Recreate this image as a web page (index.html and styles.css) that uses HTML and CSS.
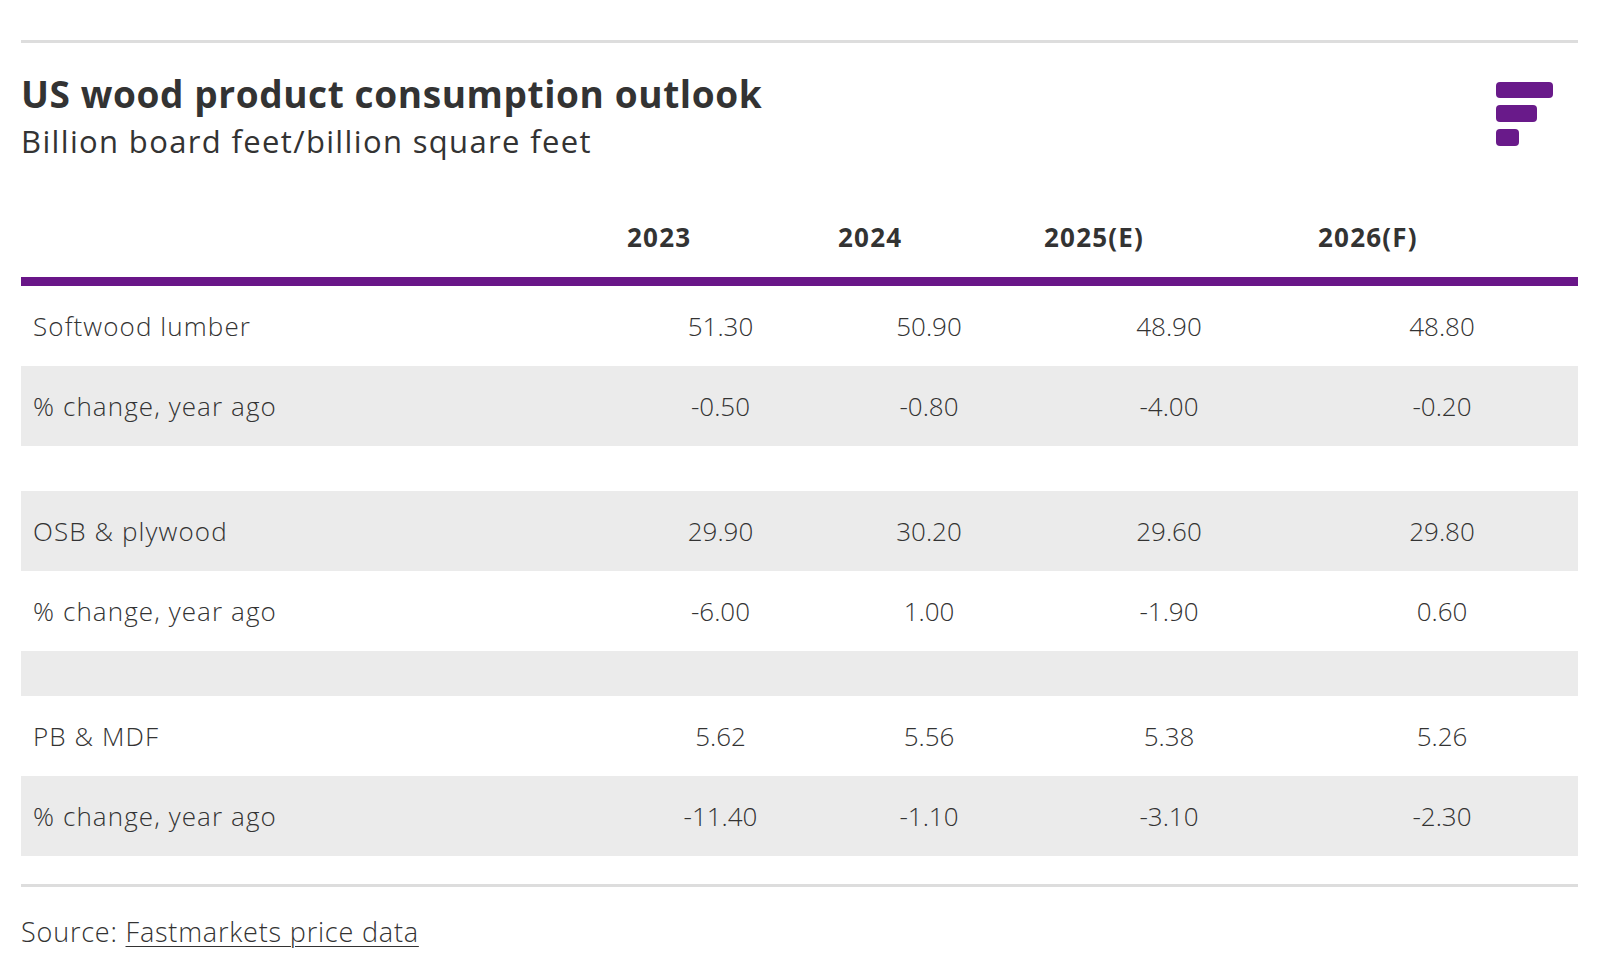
FILE: index.html
```html
<!DOCTYPE html>
<html lang="en">
<head>
<meta charset="utf-8">
<title>US wood product consumption outlook</title>
<link rel="stylesheet" href="styles.css">
</head>
<body>
<div class="chart">
  <div class="head">
    <div class="titles">
      <h1 class="title">US wood product consumption outlook</h1>
      <p class="subtitle">Billion board feet/billion square feet</p>
    </div>
    <svg class="logo" width="57" height="64" viewBox="0 0 57 64" aria-hidden="true">
      <rect x="0" y="0" width="57" height="16" rx="4" fill="#691a8a"/>
      <rect x="0" y="23" width="41" height="17" rx="4" fill="#691a8a"/>
      <rect x="0" y="47" width="23" height="17" rx="4" fill="#691a8a"/>
    </svg>
  </div>
  <div class="table">
    <div class="row hdr">
      <div class="cell"></div>
      <div class="cell">2023</div>
      <div class="cell">2024</div>
      <div class="cell">2025(E)</div>
      <div class="cell">2026(F)</div>
    </div>
    <div class="row">
      <div class="cell label">Softwood lumber</div>
      <div class="cell num">51.30</div>
      <div class="cell num">50.90</div>
      <div class="cell num">48.90</div>
      <div class="cell num">48.80</div>
    </div>
    <div class="row shade">
      <div class="cell label">% change, year ago</div>
      <div class="cell num">-0.50</div>
      <div class="cell num">-0.80</div>
      <div class="cell num">-4.00</div>
      <div class="cell num">-0.20</div>
    </div>
    <div class="row spacer"></div>
    <div class="row shade">
      <div class="cell label">OSB &amp; plywood</div>
      <div class="cell num">29.90</div>
      <div class="cell num">30.20</div>
      <div class="cell num">29.60</div>
      <div class="cell num">29.80</div>
    </div>
    <div class="row">
      <div class="cell label">% change, year ago</div>
      <div class="cell num">-6.00</div>
      <div class="cell num">1.00</div>
      <div class="cell num">-1.90</div>
      <div class="cell num">0.60</div>
    </div>
    <div class="row spacer shade"></div>
    <div class="row">
      <div class="cell label">PB &amp; MDF</div>
      <div class="cell num">5.62</div>
      <div class="cell num">5.56</div>
      <div class="cell num">5.38</div>
      <div class="cell num">5.26</div>
    </div>
    <div class="row shade">
      <div class="cell label">% change, year ago</div>
      <div class="cell num">-11.40</div>
      <div class="cell num">-1.10</div>
      <div class="cell num">-3.10</div>
      <div class="cell num">-2.30</div>
    </div>
  </div>
  <div class="source">Source: <a href="#">Fastmarkets price data</a></div>
</div>
</body>
</html>
```

FILE: styles.css
```css
html, body {
  margin: 0;
  padding: 0;
  background: #ffffff;
}

body {
  font-family: "Open Sans", "Noto Sans", "Liberation Sans", sans-serif;
  color: #333333;
}

.chart {
  width: 1557px;
  margin: 40px 0 0 21px;
  border-top: 3px solid #dddddd;
}

.head {
  display: flex;
  justify-content: space-between;
  align-items: flex-start;
  padding-top: 29px;
}

.title {
  margin: 0;
  font-size: 37px;
  line-height: 44px;
  font-weight: 700;
  letter-spacing: 0.6px;
}

.subtitle {
  margin: 7px 0 0;
  font-size: 31px;
  line-height: 36px;
  font-weight: 400;
  letter-spacing: 1.35px;
}

.logo {
  margin: 10px 25px 0 0;
}

.table {
  margin-top: 62px;
  border-bottom: 3px solid #dddddd;
  padding-bottom: 28px;
}

.row {
  display: grid;
  grid-template-columns: 594px 211px 206px 274px 272px;
  height: 80px;
  align-items: center;
}

.row.hdr {
  height: auto;
  padding-bottom: 24px;
  border-bottom: 9px solid #691688;
  line-height: 32px;
}

.row.hdr .cell {
  padding-left: 12px;
  font-weight: 700;
  letter-spacing: 1.2px;
}

.row.shade {
  background: #ebebeb;
}

.row.spacer {
  height: 45px;
}

.cell {
  font-size: 26px;
  font-weight: 300;
}

.label {
  padding-left: 12px;
  letter-spacing: 1.1px;
}

.num {
  text-align: center;
}

.source {
  margin-top: 29px;
  font-size: 27px;
  line-height: 32px;
  font-weight: 300;
  letter-spacing: 0.8px;
}

.source a {
  color: #333333;
  text-decoration: underline;
  text-underline-offset: 4px;
  text-decoration-thickness: 1px;
}
```
